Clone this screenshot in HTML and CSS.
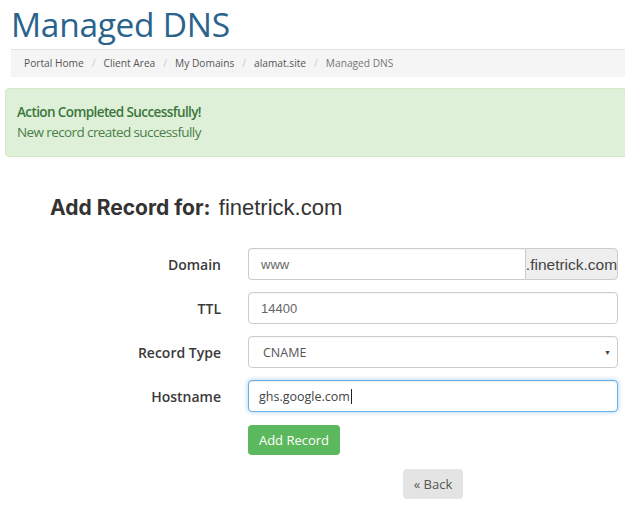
FILE: index.html
```html
<!DOCTYPE html>
<html>
<head>
<meta charset="utf-8">
<link rel="stylesheet" href="styles.css">
</head>
<body>
<div class="page">
  <h1 class="title">Managed DNS</h1>
  <nav class="crumbs">
    <span class="crumb">Portal Home</span><span class="sep">/</span>
    <span class="crumb">Client Area</span><span class="sep">/</span>
    <span class="crumb">My Domains</span><span class="sep">/</span>
    <span class="crumb">alamat.site</span><span class="sep">/</span>
    <span class="crumb active">Managed DNS</span>
  </nav>
  <div class="alert">
    <div class="alert-title">Action Completed Successfully!</div>
    <div class="alert-text">New record created successfully</div>
  </div>
  <h2 class="subhead"><span class="subhead-label">Add Record for:</span> <span class="subhead-domain">finetrick.com</span></h2>
  <form class="form">
    <label class="label">Domain</label>
    <div class="group">
      <div class="input arial">www</div>
      <div class="addon">.finetrick.com</div>
    </div>
    <label class="label">TTL</label>
    <div class="input arial">14400</div>
    <label class="label">Record Type</label>
    <div class="input select"><span>CNAME</span><span class="arrow">&#9660;</span></div>
    <label class="label">Hostname</label>
    <div class="input focus"><span>ghs.google.com</span><span class="caret"></span></div>
    <div></div>
    <div class="actions"><span class="btn btn-green">Add Record</span></div>
    <div></div>
    <div class="back-row"><span class="btn btn-grey">&laquo; Back</span></div>
  </form>
</div>
</body>
</html>
```

FILE: styles.css
```css
html, body {
  margin: 0;
  padding: 0;
  background: #fff;
  overflow: hidden;
}
.page {
  font-family: "Open Sans", "Noto Sans", sans-serif;
  color: #333;
  width: 625px;
  overflow: hidden;
}
.title {
  margin: 0;
  padding-left: 11px;
  font-family: "Open Sans", sans-serif;
  font-weight: 400;
  font-size: 33.5px;
  line-height: 48px;
  color: #2a638c;
  letter-spacing: -0.3px;
}
.crumbs {
  margin: 1px -40px 0 11px;
  height: 28px;
  box-sizing: border-box;
  border-top: 1px solid #e3e3e3;
  background: #f5f5f5;
  padding-left: 13px;
  font-size: 10.2px;
  line-height: 27px;
  color: #555;
  display: flex;
  align-items: center;
  white-space: nowrap;
}
.sep {
  color: #c8c8c8;
  margin: 0 8px;
}
.crumb.active {
  color: #777;
}
.alert {
  margin: 11px -40px 0 5px;
  background: #dff0d8;
  border: 1px solid #d6e9c6;
  border-radius: 4px;
  padding: 13px 11px 14px;
  color: #3c763d;
  font-size: 13.5px;
  line-height: 20px;
  letter-spacing: -0.6px;
}
.alert-title {
  font-weight: 600;
}
.alert-text {
  color: #4a7f4a;
}
.subhead {
  margin: 34px 0 0 50px;
  line-height: 30px;
  font-weight: 400;
  white-space: nowrap;
}
.subhead-label {
  font-family: Inter, sans-serif;
  font-weight: 700;
  font-size: 21px;
  color: #333;
}
.subhead-domain {
  font-family: "Liberation Sans", Arial, sans-serif;
  font-size: 22px;
  color: #333;
  margin-left: 2px;
}
.form {
  margin-top: 25px;
  display: grid;
  grid-template-columns: 221px 370px;
  column-gap: 27px;
  row-gap: 12px;
  align-items: center;
}
.label {
  text-align: right;
  font-weight: 600;
  font-size: 14px;
  color: #3a3a3a;
}
.group {
  display: flex;
  height: 32px;
}
.input {
  height: 32px;
  box-sizing: border-box;
  border: 1px solid #ccc;
  border-radius: 4px;
  padding: 0 12px;
  display: flex;
  align-items: center;
  font-size: 12.5px;
  color: #555;
  background: #fff;
  box-shadow: inset 0 1px 1px rgba(0,0,0,0.04);
  white-space: nowrap;
}
.group .input {
  flex: 1;
  border-radius: 4px 0 0 4px;
  border-right: none;
}
.arial {
  font-family: "Liberation Sans", Arial, sans-serif;
  font-size: 13px;
  color: #666;
}
.addon {
  width: 93px;
  box-sizing: border-box;
  background: #eee;
  border: 1px solid #ccc;
  border-radius: 0 4px 4px 0;
  font-family: "Liberation Sans", Arial, sans-serif;
  font-size: 15.5px;
  color: #444;
  display: flex;
  align-items: center;
  justify-content: center;
  padding-top: 2px;
  white-space: nowrap;
}
.select {
  justify-content: space-between;
  padding-left: 14px;
  padding-right: 6px;
}
.arrow {
  font-size: 7px;
  color: #444;
}
.focus {
  border-color: #66afe9;
  box-shadow: inset 0 1px 1px rgba(0,0,0,0.075), 0 0 5px rgba(102,175,233,0.6);
  padding-left: 10px;
  color: #444;
}
.caret {
  display: inline-block;
  width: 1px;
  height: 15px;
  background: #222;
  margin-left: 1px;
}
.actions {
  margin-top: 1px;
  display: flex;
}
.back-row {
  margin-top: 2px;
  display: flex;
  justify-content: center;
}
.btn {
  display: inline-flex;
  align-items: center;
  justify-content: center;
  height: 30px;
  box-sizing: border-box;
  border-radius: 4px;
  font-size: 13px;
  padding: 0;
  white-space: nowrap;
}
.btn-green {
  background: #5cb85c;
  color: #fff;
  width: 92px;
}
.btn-grey {
  background: #e4e4e4;
  color: #555;
  width: 60px;
}
```
